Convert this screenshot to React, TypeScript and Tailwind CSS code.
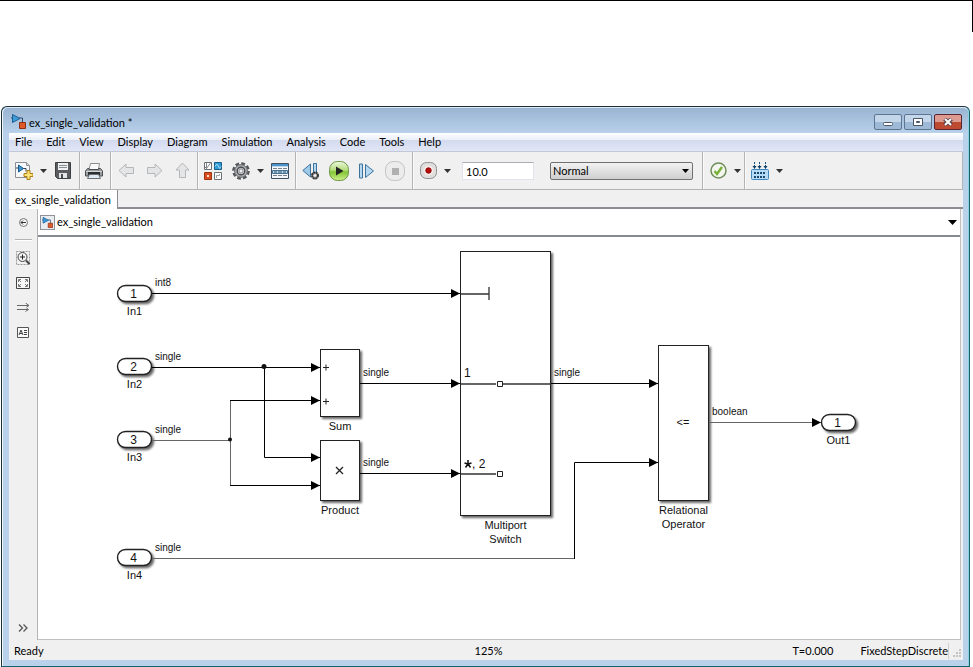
import type { ReactNode } from "react";

const MENUS = ["File", "Edit", "View", "Display", "Diagram", "Simulation", "Analysis", "Code", "Tools", "Help"];

function ModelIcon({ size }: { size: number }) {
  return (
    <svg width={size} height={size} viewBox="0 0 15 15" aria-hidden="true">
      <path d="M0 4h2M8 4h3.500v5" fill="none" stroke="#2b4a66" />
      <path d="M1.500.5v8L9 4.500z" fill="#3d9bd8" stroke="#1b5f94" />
      <path d="M8.500 8.500h6v6h-6z" fill="#e0592b" stroke="#8e2f12" />
    </svg>
  );
}

function NewIcon() {
  return (
    <svg width="18" height="18" viewBox="0 0 18 18" aria-hidden="true">
      <path d="M.5.500h11l3 3v12H.500z" fill="#f7f8f9" stroke="#8b8f94" />
      <path d="M11.500.500v3h3" fill="#d4d8dc" stroke="#8b8f94" />
      <path d="M1 6h3M8 6.500h3v3" fill="none" stroke="#33424f" />
      <path d="M3.500 3v7l5-3.500z" fill="#3b96d2" stroke="#1c5a8c" />
      <path d="M12 8.500h3v3h3v3h-3v3h-3v-3H9v-3h3z" fill="#ffe27a" stroke="#a97f14" />
    </svg>
  );
}

function SaveIcon() {
  return (
    <svg width="16" height="17" viewBox="0 0 16 17" aria-hidden="true">
      <path d="M.5.500h15v16h-13l-2-2z" fill="#5a5d60" stroke="#3d4042" />
      <path d="M3 1h10v7H3z" fill="#eef0f1" />
      <path d="M4 3.500h8M4 5.500h8" stroke="#8a8d90" />
      <path d="M4 11h8v5H4z" fill="#e3e5e6" />
      <path d="M6 12h2v4H6z" fill="#4a4d50" />
    </svg>
  );
}

function PrintIcon() {
  return (
    <svg width="18" height="16" viewBox="0 0 18 16" aria-hidden="true">
      <path d="M5.500.500h9l-1 6H4z" fill="#fafafa" stroke="#8b8f92" />
      <path d="M2.500 5.500 .500 8v5h17V8l-2-2.500h-2v1H4v-1z" fill="#9a9ea1" stroke="#4a4e51" />
      <path d="M1 8.500h16" stroke="#d4d7d9" />
      <path d="M3 9h12v3H3z" fill="#2c2f31" />
      <path d="M4.500 11.500h9l2 4h-13z" fill="#ddeaf5" stroke="#6b6f72" />
    </svg>
  );
}

function ArrowIcon({ turn }: { turn: number }) {
  return (
    <svg width="17" height="17" viewBox="0 0 17 17" aria-hidden="true">
      <path
        d="M1 8.500 8 2v3.500h7.500v6H8V15z"
        fill="#e4e5e6"
        stroke="#b4b6b8"
        transform={`rotate(${turn} 8.500 8.500)`}
      />
    </svg>
  );
}

function LibraryIcon() {
  return (
    <svg width="18" height="18" viewBox="0 0 18 18" aria-hidden="true">
      <path d="M.5.500h7v7h-7zM10.500 10.500h7v7h-7z" fill="#fff" stroke="#6b7075" />
      <path d="M2.500 1v6M1 5l1.500 1.500L6.500 1" fill="none" stroke="#80868b" />
      <path d="M10.500.500h7v7h-7z" fill="#2f9bd6" stroke="#1a5e8b" />
      <path d="M11 4.500c2-4 3-1 4 1s1 0 2-1" fill="none" stroke="#cdeafa" />
      <path d="M.5 10.500h7v7h-7z" fill="#dd4e1f" stroke="#9a3110" />
      <path d="M3 13h2v2H3z" fill="#ffe0d2" />
      <path d="M12.500 16v-2.500h3V12" fill="none" stroke="#9da2a6" />
    </svg>
  );
}

function Gear() {
  return (
    <svg width="18" height="18" viewBox="0 0 18 18" aria-hidden="true">
      <circle cx="9" cy="9" r="7.600" fill="none" stroke="#55585b" strokeWidth="2.400" strokeDasharray="3.800 2.170" />
      <circle cx="9" cy="9" r="6.300" fill="#b4b7ba" stroke="#5b5e61" />
      <circle cx="9" cy="9" r="3.800" fill="#d8dadc" stroke="#4a4d50" strokeWidth="1.400" />
      <circle cx="9" cy="9" r="2" fill="#f0f0f0" stroke="#8a8c8f" />
    </svg>
  );
}

function ExplorerIcon() {
  return (
    <svg width="18" height="16" viewBox="0 0 18 16" aria-hidden="true">
      <path d="M.5.500h17v15H.500z" fill="#f6f7f8" stroke="#3f5161" />
      <path d="M1 1h16v2H1z" fill="#4d92c6" />
      <path d="M1 3.500h16" stroke="#b7d9f0" />
      <path d="M1.500 7.500h15v3h-15z" fill="#c4dff2" stroke="#44708f" />
      <path d="M2 5.500h4m1 0h4m1 0h4M2 12.500h4m1 0h4m1 0h4" stroke="#77828b" />
      <path d="M3 9h3m1 0h4m1 0h3" stroke="#1f4666" />
    </svg>
  );
}

function StepBackIcon() {
  return (
    <svg width="18" height="18" viewBox="0 0 18 18" aria-hidden="true">
      <path d="M8.500 2v13L.800 8.500z" fill="#9fc9e8" stroke="#3d7299" />
      <path d="M11.500 1.500h3v11h-3z" fill="#b4d8f1" stroke="#3d7299" />
      <circle cx="13" cy="13.500" r="3" fill="#a8abad" stroke="#333" strokeWidth="2" strokeDasharray="2 .4" />
      <circle cx="13" cy="13.500" r="1.200" fill="#f4f4f4" />
    </svg>
  );
}

function RunIcon() {
  return (
    <svg width="20" height="20" viewBox="0 0 20 20" aria-hidden="true">
      <defs>
        <linearGradient id="run" x1="0" y1="0" x2="0" y2="1">
          <stop offset="0" stopColor="#eef8df" />
          <stop offset=".45" stopColor="#b5dd7c" />
          <stop offset=".55" stopColor="#84c534" />
          <stop offset="1" stopColor="#cdf08a" />
        </linearGradient>
      </defs>
      <rect x=".5" y=".5" width="19" height="19" rx="8" fill="url(#run)" stroke="#6d9748" />
      <path d="M7 5.500v9l7.500-4.500z" fill="#222" />
    </svg>
  );
}

function StepForwardIcon() {
  return (
    <svg width="16" height="16" viewBox="0 0 16 16" aria-hidden="true">
      <path d="M.5 1h3v14h-3z" fill="#b4d8f1" stroke="#3d7299" />
      <path d="M6.500 1.500v13L14.500 8z" fill="#b4d8f1" stroke="#3d7299" />
    </svg>
  );
}

function StopIcon() {
  return (
    <svg width="20" height="20" viewBox="0 0 20 20" aria-hidden="true">
      <rect x=".5" y=".5" width="19" height="19" rx="8" fill="#ececec" stroke="#c2c2c2" />
      <path d="M7 7h7v7H7z" fill="#b0b0b0" />
    </svg>
  );
}

function RecordIcon() {
  return (
    <svg width="17" height="17" viewBox="0 0 17 17" aria-hidden="true">
      <rect x=".5" y=".5" width="16" height="16" rx="6" fill="#dedede" stroke="#909090" />
      <circle cx="8.500" cy="8.500" r="5" fill="#f6e9e6" />
      <circle cx="8.500" cy="8.500" r="2.700" fill="#b80d0d" stroke="#8c0606" />
    </svg>
  );
}

function CheckIcon() {
  return (
    <svg width="17" height="17" viewBox="0 0 17 17" aria-hidden="true">
      <circle cx="8.500" cy="8.500" r="7.500" fill="#f3f7ee" stroke="#6f8c5a" strokeWidth="1.500" />
      <path d="m4.500 9 2.500 3 5-7" fill="none" stroke="#7ab03c" strokeWidth="2.500" />
    </svg>
  );
}

function BuildIcon() {
  return (
    <svg width="18" height="18" viewBox="0 0 18 18" aria-hidden="true">
      <path d="M3.500 0v5M8.500 0v5M14.500 0v5" stroke="#16507f" strokeDasharray="2 1" />
      <path d="M1.500 4h4l-2 3zM6.500 4h4l-2 3zM12.500 4h4l-2 3z" fill="#123f68" />
      <rect x=".5" y="7.500" width="17" height="10" rx="1" fill="#b5dbf6" stroke="#3f86bd" />
      <path d="M3 11h12M3 15h12" stroke="#174a75" strokeWidth="2" strokeDasharray="2 1" />
    </svg>
  );
}

function Caret({ label }: { label: string }) {
  return (
    <button type="button" aria-label={label} className="ml-px grid h-6 w-4 shrink-0 place-items-center">
      <svg width="7" height="4" viewBox="0 0 7 4" aria-hidden="true">
        <path d="M0 0h7L3.500 4z" fill="#333" />
      </svg>
    </button>
  );
}

function Tool({ label, children }: { label: string; children: ReactNode }) {
  return (
    <button type="button" aria-label={label} className="grid h-6 w-5 shrink-0 place-items-center">
      {children}
    </button>
  );
}

function Divider() {
  return <div className="w-0.5 shrink-0 self-stretch border-l border-[#b4b4b4] bg-[#fafafa]" />;
}

function TitleBar() {
  const control = "grid h-4 w-7 place-items-center rounded-xs border";
  return (
    <div className="flex h-[25px] items-center pl-0.5 pr-px pt-0.5">
      <ModelIcon size={15} />
      <h1 className="flex-1 pl-[3px] pt-0.5 leading-4">ex_single_validation *</h1>
      <div className="flex gap-0.5">
        <button
          type="button"
          aria-label="Minimize"
          className={`${control} border-[#5d7592] bg-linear-to-b from-[#c3d6ea] from-50% to-[#9db9d6] to-50%`}
        >
          <svg width="10" height="4" viewBox="0 0 10 4" className="mt-1">
            <rect x=".5" y=".5" width="9" height="3" rx="1" fill="#fff" stroke="#4c5566" />
          </svg>
        </button>
        <button
          type="button"
          aria-label="Maximize"
          className={`${control} border-[#5d7592] bg-linear-to-b from-[#c3d6ea] from-50% to-[#9db9d6] to-50%`}
        >
          <svg width="10" height="8" viewBox="0 0 10 8">
            <path d="M.5.500h9v7h-9z" fill="#fff" stroke="#4c5566" />
            <path d="M3.500 3.500h3v1h-3z" fill="#9db9d6" stroke="#4c5566" />
          </svg>
        </button>
        <button
          type="button"
          aria-label="Close"
          className={`${control} border-[#5b2430] bg-linear-to-b from-[#dd9a8e] from-50% to-[#bf4a32] to-50%`}
        >
          <svg width="10" height="8" viewBox="0 0 10 8">
            <path d="m1.500 1 7 6m0-6-7 6" stroke="#56404a" strokeWidth="4" />
            <path d="m2 1 6 6m0-6L2 7" stroke="#fff" strokeWidth="2" />
          </svg>
        </button>
      </div>
    </div>
  );
}

function Toolbar() {
  return (
    <div className="flex h-[38px] items-center border-b border-r border-[#b4b4b4] bg-[#f0f0f0]">
      <div className="flex w-[70px] shrink-0 items-center pl-[5px]">
        <Tool label="New model"><NewIcon /></Tool>
        <Caret label="New options" />
        <div className="w-0.5" />
        <Tool label="Save"><SaveIcon /></Tool>
      </div>
      <Divider />
      <div className="w-[29px] shrink-0 pl-[3px]">
        <Tool label="Print"><PrintIcon /></Tool>
      </div>
      <Divider />
      <div className="flex w-[85px] shrink-0 items-center gap-2 pl-1">
        <Tool label="Back"><ArrowIcon turn={0} /></Tool>
        <Tool label="Forward"><ArrowIcon turn={180} /></Tool>
        <Tool label="Up"><ArrowIcon turn={90} /></Tool>
      </div>
      <Divider />
      <div className="flex w-24 shrink-0 items-center pl-1">
        <Tool label="Library browser"><LibraryIcon /></Tool>
        <div className="w-2" />
        <Tool label="Model configuration"><Gear /></Tool>
        <Caret label="Configuration options" />
        <div className="w-0.5" />
        <Tool label="Model explorer"><ExplorerIcon /></Tool>
      </div>
      <Divider />
      <div className="flex w-[115px] shrink-0 items-center gap-2 pl-1">
        <Tool label="Step back"><StepBackIcon /></Tool>
        <Tool label="Run"><RunIcon /></Tool>
        <Tool label="Step forward"><StepForwardIcon /></Tool>
        <Tool label="Stop"><StopIcon /></Tool>
      </div>
      <Divider />
      <div className="flex w-[288px] shrink-0 items-center pl-1">
        <Tool label="Record"><RecordIcon /></Tool>
        <Caret label="Record options" />
        <input
          aria-label="Simulation stop time"
          defaultValue="10.0"
          className="ml-[7px] h-[18px] w-[72px] border border-[#e2e3ea] border-t-[#abadb3] bg-white px-[3px] pt-0.5"
        />
        <div className="relative ml-4">
          <select
            aria-label="Simulation mode"
            className="h-[18px] w-[143px] appearance-none rounded-xs border border-[#707070] bg-linear-to-b from-[#f2f2f2] to-[#cfcfcf] px-0.5"
          >
            <option>Normal</option>
          </select>
          <svg width="7" height="4" viewBox="0 0 7 4" className="pointer-events-none absolute right-1 top-[7px]">
            <path d="M0 0h7L3.500 4z" fill="#000" />
          </svg>
        </div>
      </div>
      <Divider />
      <div className="flex w-10 shrink-0 items-center pl-1">
        <Tool label="Model advisor"><CheckIcon /></Tool>
        <Caret label="Advisor options" />
      </div>
      <Divider />
      <div className="flex items-center pl-1">
        <Tool label="Build model"><BuildIcon /></Tool>
        <Caret label="Build options" />
      </div>
    </div>
  );
}

function SideButton({ label, children }: { label: string; children: ReactNode }) {
  return (
    <button type="button" aria-label={label} className="grid h-[25px] w-full place-items-center">
      {children}
    </button>
  );
}

function Sidebar() {
  return (
    <div className="flex w-[29px] shrink-0 flex-col items-center border-r border-[#b4b4b4]">
      <SideButton label="Hide browser">
        <svg width="9" height="9" viewBox="0 0 9 9" className="mt-0.5">
          <circle cx="4.500" cy="4.500" r="4" fill="#f6f6f6" stroke="#777" />
          <path d="M2 4.500h5M4 2.500l-2 2 2 2" fill="none" stroke="#333" />
        </svg>
      </SideButton>
      <div className="mb-1 mt-[5px] h-0.5 w-[17px] border-t border-[#b4b4b4] bg-white" />
      <SideButton label="Zoom">
        <svg width="14" height="14" viewBox="0 0 14 14">
          <path d="M.5.500h13v13H.500z" fill="none" stroke="#999" strokeDasharray="2 1" />
          <circle cx="6.500" cy="6" r="4.500" fill="#f4f4f4" stroke="#444" />
          <path d="M4 6h5M6.500 3.500v5" stroke="#222" />
          <path d="m10 9.500 3.500 3.500" stroke="#444" strokeWidth="2" />
        </svg>
      </SideButton>
      <SideButton label="Fit to view">
        <svg width="14" height="12" viewBox="0 0 14 12">
          <path d="M.5.500h13v11H.500z" fill="#f8f8f8" stroke="#444" />
          <path
            d="M2.500 5V2.500H5M3 3l2 2M9 2.500h2.500V5M11 3 9 5M2.500 7v2.500H5M3 9l2-2M9 9.500h2.500V7M11 9 9 7"
            fill="none"
            stroke="#777"
          />
        </svg>
      </SideButton>
      <SideButton label="Signal display">
        <svg width="13" height="9" viewBox="0 0 13 9">
          <path d="M0 2.500h11M0 6.500h11M8.500 0 12 2.500 9.500 4M8.500 8.500l3-2-2-1.500" fill="none" stroke="#666" />
        </svg>
      </SideButton>
      <SideButton label="Annotation">
        <svg width="12" height="11" viewBox="0 0 12 11">
          <path d="M.5.500h11v10H.500z" fill="#fafafa" stroke="#555" />
          <path d="m2 8 2-5 2 5M3 6.500h2M7 3.500h3M7 5.500h3M7 7.500h3" fill="none" stroke="#444" />
        </svg>
      </SideButton>
      <div className="flex-1" />
      <SideButton label="Show more">
        <svg width="10" height="8" viewBox="0 0 10 8">
          <path d="m1 .500 3.500 3.500L1 7.500M5.500.500 9 4 5.500 7.500" fill="none" stroke="#555" strokeWidth="1.300" />
        </svg>
      </SideButton>
    </div>
  );
}

function Port({ x, y, num, name }: { x: number; y: number; num: string; name: string }) {
  return (
    <g>
      <rect
        x={x}
        y={y}
        width="34"
        height="16"
        rx="8"
        fill="#fff"
        stroke="#222"
        strokeWidth="1.400"
        filter="url(#shadow)"
      />
      <text x={x + 16} y={y + 12} fontSize="12" textAnchor="middle">{num}</text>
      <text x={x + 17} y={y + 29} fontSize="11" textAnchor="middle">{name}</text>
    </g>
  );
}

type BlockProps = { x: number; y: number; width: number; height: number; name: string[] };

function Block({ x, y, width, height, name }: BlockProps) {
  return (
    <g>
      <rect x={x} y={y} width={width} height={height} fill="#fff" stroke="#222" filter="url(#shadow)" />
      {name.map((line, i) => (
        <text key={line} x={x + width / 2} y={y + height + 13 + i * 14} fontSize="11" textAnchor="middle">
          {line}
        </text>
      ))}
    </g>
  );
}

const BLOCKS: BlockProps[] = [
  { x: 282.5, y: 112.5, width: 39, height: 67, name: ["Sum"] },
  { x: 282.5, y: 203.5, width: 39, height: 60, name: ["Product"] },
  { x: 422.5, y: 14.5, width: 90, height: 264, name: ["Multiport", "Switch"] },
  { x: 620.5, y: 108.5, width: 50, height: 155, name: ["Relational", "Operator"] },
];

// Every wire ends at the tip of its arrow head
const WIRES = [
  { d: "M114 56.500H422", color: "#000" },
  { d: "M114 130.500H282", color: "#000" },
  { d: "M226.500 130V220.500H282", color: "#000" },
  { d: "M192 163.500H282", color: "#000" },
  { d: "M192 248.500H282", color: "#000" },
  { d: "M322 146.500H422", color: "#000" },
  { d: "M322 236.500H422", color: "#000" },
  { d: "M513 146.500H620", color: "#000" },
  { d: "M536.500 322V225.500H620", color: "#000" },
  { d: "M671 185.500H783", color: "#666" },
];

const SIGNALS = [
  { x: 117, y: 49, text: "int8" },
  { x: 117, y: 123, text: "single" },
  { x: 117, y: 196, text: "single" },
  { x: 117, y: 314, text: "single" },
  { x: 325, y: 139, text: "single" },
  { x: 325, y: 229, text: "single" },
  { x: 516, y: 139, text: "single" },
  { x: 674, y: 178, text: "boolean" },
];

function Diagram() {
  return (
    <svg
      width="922"
      height="402"
      viewBox="0 0 922 402"
      role="img"
      aria-label="Block diagram of ex_single_validation"
      className="font-['Liberation_Sans',Arial,sans-serif]"
      fill="#111"
    >
      <defs>
        <filter id="shadow" x="-20%" y="-20%" width="150%" height="150%">
          <feDropShadow dx="2" dy="2" stdDeviation="1.200" floodColor="#000" floodOpacity=".6" />
        </filter>
        <marker
          id="head"
          markerUnits="userSpaceOnUse"
          markerWidth="9"
          markerHeight="9"
          refX="9"
          refY="4.500"
          orient="auto"
        >
          <path d="M0 0v9l9-4.500z" fill="#000" />
        </marker>
      </defs>

      {BLOCKS.map((b) => <Block key={b.name[0]} {...b} />)}
      <Port x={79.5} y={48.5} num="1" name="In1" />
      <Port x={79.5} y={121.5} num="2" name="In2" />
      <Port x={79.5} y={194.5} num="3" name="In3" />
      <Port x={79.5} y={312.5} num="4" name="In4" />
      <Port x={783.5} y={177.5} num="1" name="Out1" />

      <path d="M114 203.500H192M192.500 163V249M114 321.500H537" fill="none" stroke="#666" />
      {WIRES.map((w) => (
        <path key={w.d} d={w.d} fill="none" stroke={w.color} markerEnd="url(#head)" />
      ))}
      <circle cx="226" cy="129.500" r="2.500" />
      <circle cx="192" cy="202.500" r="2" />

      {/* switch contacts */}
      <path d="M423 57h28M451 50v13M423 147h35M464 147h49M423 237h35" stroke="#333" strokeWidth="1.300" />
      <path d="M459.500 144.500h5v5h-5zM459.500 234.500h5v5h-5z" fill="#fff" stroke="#222" />
      <path d="M285 130.500h6M288 127.500v6M285 164.500h6M288 161.500v6" stroke="#222" />
      <path d="m298 230 7 7m0-7-7 7" stroke="#222" strokeWidth="1.300" />

      <text x="426" y="140" fontSize="12">1</text>
      <path
        d="M430 227v-4M430 227l3.500-1M430 227l2.500 3.500M430 227l-2.500 3.500M430 227l-3.500-1"
        stroke="#111"
        strokeWidth="1.500"
      />
      <text x="434" y="231" fontSize="12">, 2</text>
      <text x="645" y="189" fontSize="11" textAnchor="middle">&lt;=</text>

      {SIGNALS.map((s) => (
        <text key={`${s.x}-${s.y}`} x={s.x} y={s.y} fontSize="10">{s.text}</text>
      ))}
    </svg>
  );
}

export default function App() {
  return (
    <div className="flex min-h-screen flex-col bg-white font-['Lato','Open_Sans',sans-serif] text-[11px] text-black">
      <header className="flex h-[106px] items-start justify-end border-t border-black">
        <div className="h-[31px] w-px bg-black" />
      </header>

      <div className="ml-px mr-[3px] flex flex-1 flex-col rounded-t-md border border-[#1c3238] border-b-[#14646e] border-r-[#14646e] bg-[#b9d1ea] bg-linear-to-b from-[#98b3d1] to-[#b9d1ea] to-[26px]">
        <div className="flex flex-1 flex-col rounded-t-md border-x border-t border-t-[#dfeaf5] border-l-[#f2f7fb] border-r-[#8fd0e0] pb-1.5 pl-1.5 pr-[5px]">
          <TitleBar />

          <nav className="flex h-[19px] items-center gap-3.5 border-b border-[#c3c8d6] bg-[linear-gradient(to_bottom,#ffffff,#e9eef7_38%,#d3daee_38%,#e1e6f6)] pl-1.5">
            {MENUS.map((m) => (
              <button key={m} type="button" className="leading-4">{m}</button>
            ))}
          </nav>

          <Toolbar />

          <div className="flex h-[19px] border-b-2 border-[#8a8d92] bg-[#f0f0f0]" role="tablist">
            <button
              type="button"
              role="tab"
              aria-selected="true"
              className="-mb-0.5 w-[109px] shrink-0 border-r border-[#8a8d92] bg-white pt-0.5"
            >
              ex_single_validation
            </button>
          </div>

          <div className="flex flex-1 bg-[#f0f0f0] pr-0.5">
            <Sidebar />
            <main className="flex min-w-0 flex-1 flex-col border-b border-r border-[#c0c0c0] bg-white">
              <div className="flex h-7 items-center border-b-2 border-[#868a92] pl-0.5">
                <span className="grid size-[15px] place-items-center border border-[#8f9398] bg-[#e9edf1]">
                  <ModelIcon size={11} />
                </span>
                <span className="flex-1 pl-0.5">ex_single_validation</span>
                <button type="button" aria-label="Show model path" className="grid size-4 place-items-center">
                  <svg width="9" height="5" viewBox="0 0 9 5">
                    <path d="M0 0h9L4.500 5z" fill="#000" />
                  </svg>
                </button>
              </div>
              <div className="flex-1 overflow-hidden">
                <Diagram />
              </div>
            </main>
          </div>

          <footer className="flex h-5 items-center bg-[#f0f0f0] pl-[5px] pt-0.5">
            <span className="flex-1">Ready</span>
            <span>125%</span>
            <div className="flex flex-1 items-center justify-end">
              <span className="w-[68px]">T=0.000</span>
              <span className="border-r border-[#d0d0d0]">FixedStepDiscrete</span>
              <svg width="10" height="10" viewBox="0 0 10 10" className="mx-0.5 mt-1">
                <path d="M8 1h2v2H8zM8 4h2v2H8zM5 4h2v2H5zM8 7h2v2H8zM5 7h2v2H5zM2 7h2v2H2z" fill="#c4c4c4" />
              </svg>
            </div>
          </footer>
        </div>
      </div>
    </div>
  );
}
